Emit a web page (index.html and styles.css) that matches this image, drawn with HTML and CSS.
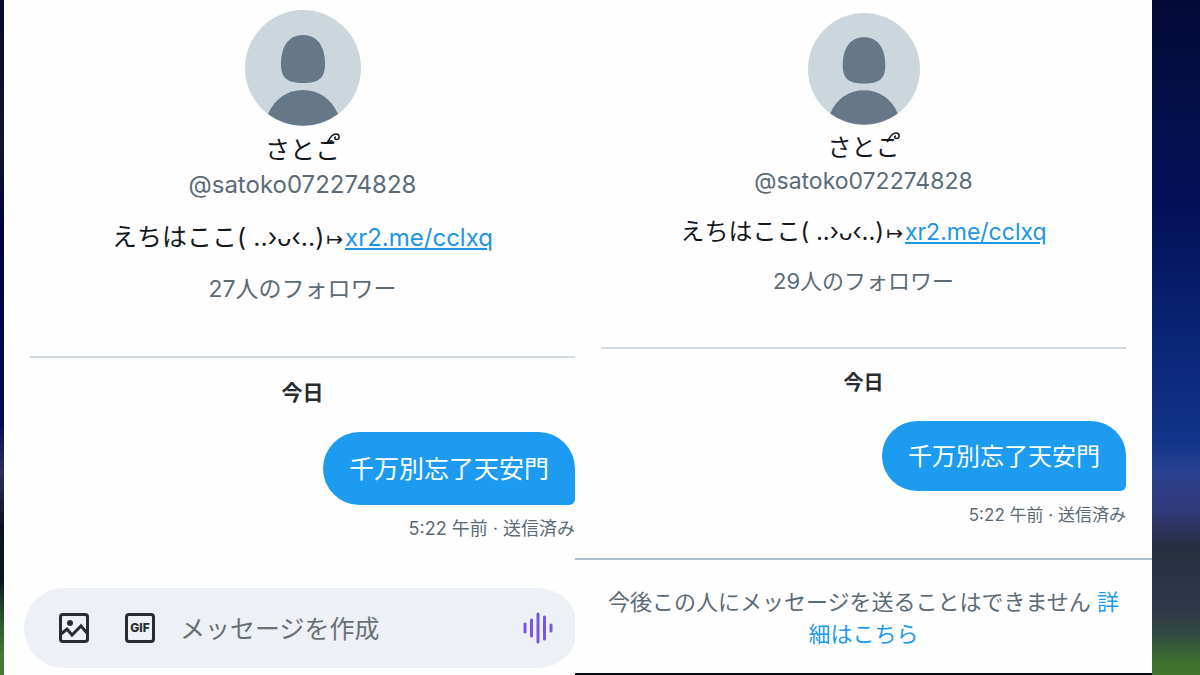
FILE: index.html
```html
<!DOCTYPE html>
<html lang="ja">
<head>
    <meta charset="UTF-8">
    <meta name="viewport" content="width=device-width, initial-scale=1.0">
    <title>メッセージ</title>
    <link rel="stylesheet" href="styles.css">
</head>
<body>

    <main class="screens">
        <section class="panel panel-left">
            <div class="conversation">
                <div class="profile">
                    <svg class="avatar" viewBox="0 0 116 116" aria-hidden="true">
                        <circle cx="58" cy="58" r="58" fill="#ccd6dd"/>
                        <path d="M58 25C72 25 80 36 80 54C80 68 74 73 58 73C42 73 36 68 36 54C36 36 44 25 58 25Z" fill="#667888"/>
                        <path d="M23 104C30 88 43 80 58 80C73 80 86 88 93 104A58 58 0 0 1 23 104Z" fill="#667888"/>
                    </svg>
                    <h1 class="name">さとこ<svg class="swirl" viewBox="0 0 16 12" aria-hidden="true"><path d="M3 10C5 7 7 1 12 1C16 1 16 6 13 6.500C10.500 7 10 4 12 4M3 10C6 7 8 7.500 9 9"/></svg></h1>
                    <p class="handle">@satoko072274828</p>
                    <p class="bio">えちはここ( ..›ᴗ‹..)<span class="arrow">↦</span><a href="#">xr2.me/cclxq</a></p>
                    <p class="followers">27人のフォロワー</p>
                </div>
                <h2 class="date">今日</h2>
                <div class="message">
                    <p class="bubble">千万別忘了天安門</p>
                    <p class="meta">5:22 午前 · 送信済み</p>
                </div>
            </div>
            <form class="composer">
                <button type="button" aria-label="画像">
                    <svg viewBox="0 0 32 32" fill="none" stroke="#272c30" stroke-width="3">
                        <rect x="2.500" y="2.500" width="27" height="27" rx="2.500"/>
                        <circle cx="12" cy="11" r="3" fill="#272c30" stroke="none"/>
                        <path d="M3 22L9 17L14 23L23 14L29 21"/>
                    </svg>
                </button>
                <button type="button" aria-label="GIF">
                    <svg viewBox="0 0 32 32" fill="none" stroke="#272c30" stroke-width="3">
                        <rect x="2.500" y="2.500" width="27" height="27" rx="2.500"/>
                        <text class="gif" x="16" y="20" text-anchor="middle">GIF</text>
                    </svg>
                </button>
                <input type="text" name="message" placeholder="メッセージを作成" aria-label="メッセージを作成">
                <button type="button" aria-label="音声">
                    <svg viewBox="0 0 32 32" fill="none" stroke="#7856e0" stroke-width="3" stroke-linecap="round">
                        <path d="M3 12V20M9.500 8V24M16 2V30M22.500 5V27M29 13V19"/>
                    </svg>
                </button>
            </form>
        </section>

        <section class="panel panel-right">
            <div class="conversation">
                <div class="profile">
                    <svg class="avatar" viewBox="0 0 116 116" aria-hidden="true">
                        <circle cx="58" cy="58" r="58" fill="#ccd6dd"/>
                        <path d="M58 25C72 25 80 36 80 54C80 68 74 73 58 73C42 73 36 68 36 54C36 36 44 25 58 25Z" fill="#667888"/>
                        <path d="M23 104C30 88 43 80 58 80C73 80 86 88 93 104A58 58 0 0 1 23 104Z" fill="#667888"/>
                    </svg>
                    <h1 class="name">さとこ<svg class="swirl" viewBox="0 0 16 12" aria-hidden="true"><path d="M3 10C5 7 7 1 12 1C16 1 16 6 13 6.500C10.500 7 10 4 12 4M3 10C6 7 8 7.500 9 9"/></svg></h1>
                    <p class="handle">@satoko072274828</p>
                    <p class="bio">えちはここ( ..›ᴗ‹..)<span class="arrow">↦</span><a href="#">xr2.me/cclxq</a></p>
                    <p class="followers">29人のフォロワー</p>
                </div>
                <h2 class="date">今日</h2>
                <div class="message">
                    <p class="bubble">千万別忘了天安門</p>
                    <p class="meta">5:22 午前 · 送信済み</p>
                </div>
            </div>
            <p class="notice">今後この人にメッセージを送ることはできません <a href="#">詳細はこちら</a></p>
        </section>
    </main>

</body>
</html>
```
FILE: styles.css
```css
* {
    box-sizing: border-box;
}

body {
    margin: 0;
    font-family: Inter, "Noto Sans CJK JP", sans-serif;
    color: #14181c;
    background: linear-gradient(#020a38 0%, #04104a 18%, #031058 30%, #0a2273 48%, #103488 65%, #2c4090 70%, #303a75 76%, #262e40 81%, #30374a 90%, #304a40 94%, #3f6f30 98%, #43752c 100%);
}

h1, h2, p {
    margin: 0;
    font-weight: 400;
}

a {
    color: #1d94e4;
}

/* Two phone screens side by side on a blurred wallpaper */
.screens {
    display: grid;
    grid-template-columns: 571fr 577fr;
    min-height: 100vh;
    padding: 0 4% 0 4px;
    background: linear-gradient(#050a2c 0%, #10142c 22%, #00033c 34%, #000a50 62%, #2c2f5c 70%, #0a1220 78%, #0a1520 86%, #26502c 91%, #457832 97%) no-repeat left / 4px 100%;
}

.panel {
    display: flex;
    flex-direction: column;
    justify-content: space-between;
    min-width: 0;
    overflow: hidden;
    background: #fefefe;
}

.panel-left {
    --avatar: 116px;
    --name-row: 49px;
    --text: 24px;
    --bio: 25px;
    --small: 23px;
    --date: 21px;
    --meta: 18px;
    --row: 34px;
    padding: 10px 0 7px 26px;
}

.panel-right {
    --avatar: 112px;
    --name-row: 46px;
    --text: 23px;
    --bio: 24px;
    --small: 22px;
    --date: 20px;
    --meta: 17px;
    --row: 32px;
    padding-top: 13px;
    border-bottom: 2px solid #05080c;
}

.panel-right .conversation {
    padding: 0 26px;
}

.profile {
    display: flex;
    flex-direction: column;
    align-items: center;
    padding-bottom: 50px;
    border-bottom: 2px solid #d3dadf;
    text-align: center;
}

.avatar {
    width: var(--avatar);
    height: var(--avatar);
}

.name {
    position: relative;
    font-size: var(--bio);
    line-height: var(--name-row);
}

/* Curl above the last character of the name */
.swirl {
    position: absolute;
    top: 7px;
    right: 0;
    width: 16px;
    height: 12px;
    fill: none;
    stroke: #14181c;
    stroke-width: 1.5;
}

.handle {
    font-size: var(--text);
    line-height: 20px;
    color: #5b6b76;
}

.bio {
    margin-top: 25px;
    font-size: var(--bio);
    line-height: var(--row);
    white-space: nowrap;
}

.bio a {
    font-size: var(--text);
}

.arrow {
    margin: 0 2px;
    font-family: "DejaVu Sans", sans-serif;
    font-size: 20px;
    line-height: 1;
}

.followers {
    margin-top: 17px;
    font-size: var(--small);
    line-height: var(--row);
    color: #5b6b76;
}

.date {
    margin-top: 18px;
    font-size: var(--date);
    font-weight: 700;
    line-height: var(--row);
    text-align: center;
    color: #272c30;
}

.message {
    display: flex;
    flex-direction: column;
    align-items: flex-end;
    margin-top: 22px;
}

.bubble {
    padding: 19px 26px 17px;
    border-radius: 37px 37px 6px 37px;
    font-size: var(--bio);
    line-height: 37px;
    color: #fff;
    background: #1d9bf0;
}

.panel-right .bubble {
    line-height: 34px;
}

.meta {
    margin-top: 11px;
    font-size: var(--meta);
    line-height: 26px;
    color: #5b6b76;
}

.composer {
    display: flex;
    align-items: center;
    gap: 34px;
    height: 80px;
    margin: 0 -3px 0 -6px;
    padding: 0 24px 0 34px;
    border-radius: 40px;
    background: #edf0f4;
}

.composer button {
    flex: none;
    width: 32px;
    height: 32px;
    padding: 0;
    border: none;
    background: none;
    cursor: pointer;
}

.composer svg {
    display: block;
}

.composer input {
    flex: 1;
    min-width: 0;
    margin-left: -10px;
    padding: 2px 0 0;
    border: none;
    outline: none;
    font: inherit;
    font-size: 25px;
    line-height: 37px;
    background: none;
}

.composer input::placeholder {
    color: #6a7075;
}

.gif {
    font-family: Inter, sans-serif;
    font-size: 12px;
    font-weight: 800;
    fill: #272c30;
    stroke: none;
}

.notice {
    padding: 26px 26px 23px;
    border-top: 2px solid #aebdca;
    font-size: 22px;
    line-height: 32px;
    text-align: center;
    color: #5b6b76;
}

.notice a {
    color: #1d9bf0;
    text-decoration: none;
}
```
